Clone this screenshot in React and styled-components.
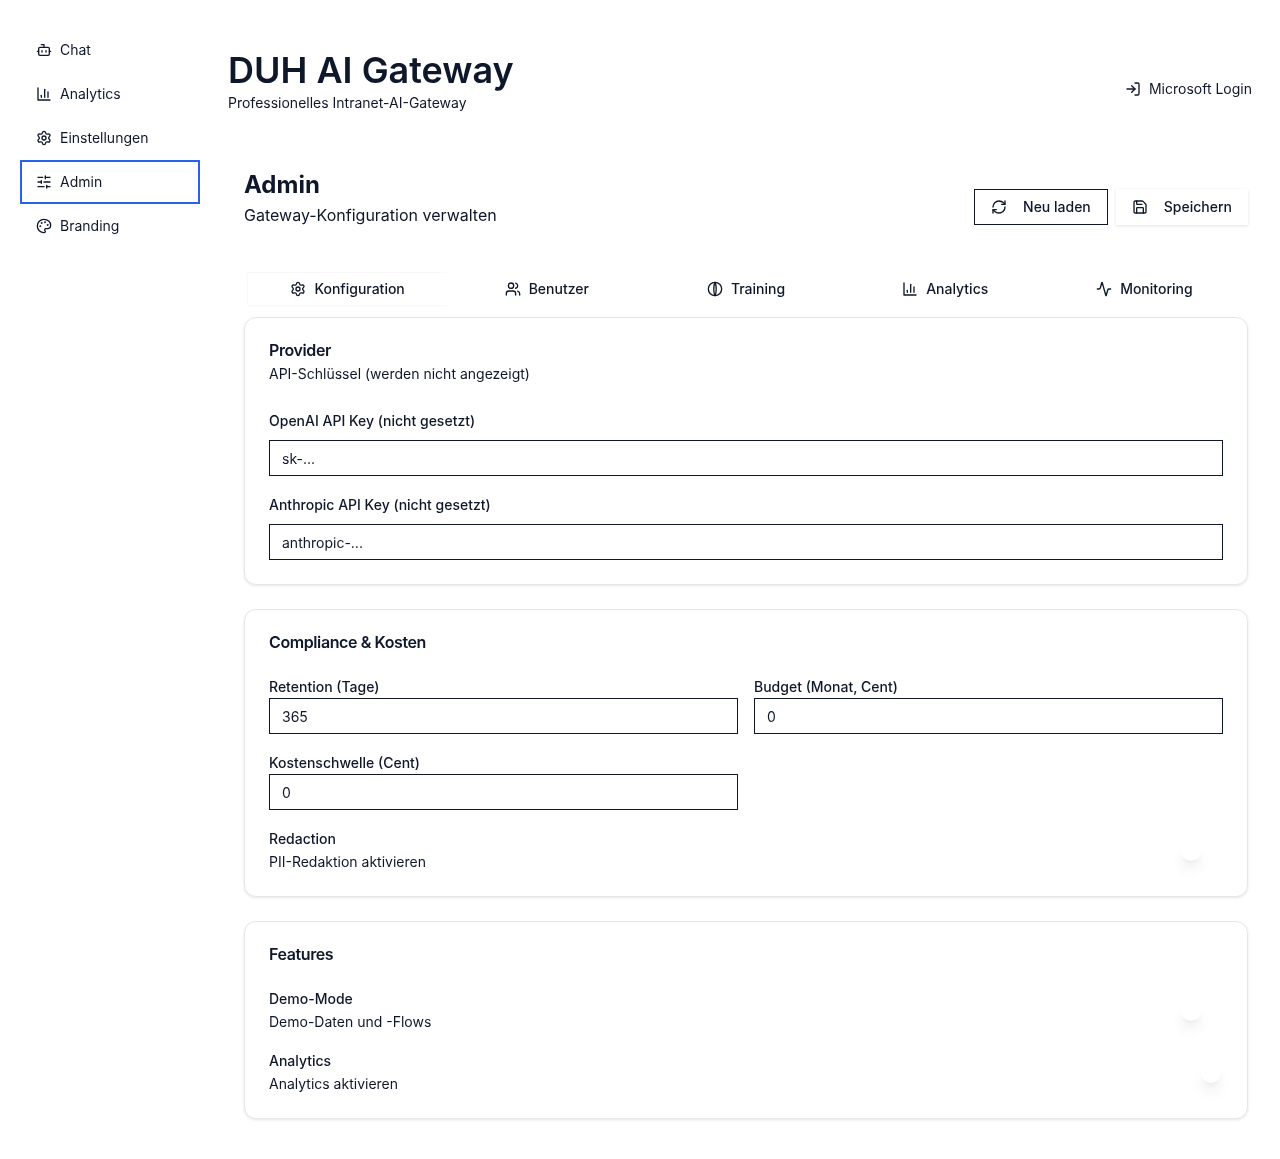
import React from 'react'
import styled, { createGlobalStyle } from 'styled-components'
import {
    Activity,
    Bot,
    LogIn,
    Palette,
    RefreshCw,
    Save,
    Settings,
    SlidersHorizontal,
    Users
} from 'lucide-react'

const GlobalStyle = createGlobalStyle`
  * { box-sizing: border-box; }
  body {
    margin: 0;
    background: #ffffff;
    color: #0f172a;
    font-family: Inter, "Liberation Sans", sans-serif;
    -webkit-font-smoothing: antialiased;
  }
`

const Shell = styled.div`
  display: flex;
  min-height: 1159px;
  will-change: transform;
`

const Sidebar = styled.nav`
  width: 220px;
  flex-shrink: 0;
  padding: 28px 20px;
  display: flex;
  flex-direction: column;
`

const NavItem = styled.a`
  display: flex;
  align-items: center;
  gap: 8px;
  height: 44px;
  padding: 0 14px;
  font-size: 14px;
  line-height: 20px;
  color: #0f172a;
  border: 2px solid ${props => (props.$active ? '#2563eb' : 'transparent')};
`

const Main = styled.main`
  flex: 1;
  min-width: 0;
  padding: 0 28px 0 8px;
`

const Header = styled.header`
  display: flex;
  justify-content: space-between;
  align-items: flex-end;
  padding-top: 50px;
`

const Title = styled.h1`
  margin: 0;
  font-size: 36px;
  line-height: 40px;
  font-weight: 600;
  color: #0f172a;
`

const Tagline = styled.p`
  margin: 3px 0 0;
  font-size: 14px;
  line-height: 20px;
  color: #0f172a;
`

const LoginLink = styled.a`
  display: flex;
  align-items: center;
  gap: 8px;
  margin-bottom: 14px;
  font-size: 14px;
  line-height: 20px;
  color: #0f172a;
`

const Content = styled.div`
  padding: 56px 4px 40px 16px;
`

const PageHead = styled.div`
  display: flex;
  justify-content: space-between;
  align-items: flex-end;
`

const PageTitle = styled.h2`
  margin: 0;
  font-size: 24px;
  line-height: 32px;
  font-weight: 700;
  color: #0f172a;
`

const PageSub = styled.p`
  margin: 2px 0 0;
  font-size: 16px;
  line-height: 24px;
  color: #0f172a;
`

const Actions = styled.div`
  display: flex;
  gap: 8px;
  margin-bottom: 2px;
`

const ActionButton = styled.button`
  display: flex;
  align-items: center;
  gap: 16px;
  height: 36px;
  padding: 0 16px;
  background: #ffffff;
  color: #0f172a;
  font: 500 14px/20px Inter, "Liberation Sans", sans-serif;
  border: ${props => (props.$outlined ? '1px solid #0f172a' : '0')};
  box-shadow: ${props => (props.$outlined ? 'none' : '0 1px 3px rgba(15, 23, 42, 0.12)')};
`

const TabList = styled.div`
  display: grid;
  grid-template-columns: repeat(5, 1fr);
  margin-top: 42px;
  padding: 4px;
  height: 40px;
`

const Tab = styled.button`
  display: flex;
  align-items: center;
  justify-content: center;
  gap: 8px;
  background: #ffffff;
  border: 0;
  padding: 0;
  color: #0f172a;
  font: 500 14px/20px Inter, "Liberation Sans", sans-serif;
  box-shadow: ${props => (props.$active ? '0 0 2px rgba(15, 23, 42, 0.08)' : 'none')};
`

const Card = styled.section`
  margin-top: ${props => props.$gap}px;
  padding: 24px;
  background: #ffffff;
  border: 1px solid #e5e7eb;
  border-radius: 12px;
  box-shadow: 0 1px 3px rgba(15, 23, 42, 0.1);
`

const CardTitle = styled.h3`
  margin: 0;
  font-size: 16px;
  line-height: 16px;
  font-weight: 600;
  letter-spacing: -0.4px;
  color: #0f172a;
`

const CardSub = styled.p`
  margin: 6px 0 0;
  font-size: 14px;
  line-height: 20px;
  color: #0f172a;
`

const Stack = styled.div`
  display: flex;
  flex-direction: column;
  gap: 19px;
  margin-top: 27px;
`

const Field = styled.label`
  display: block;
`

const FieldLabel = styled.span`
  display: block;
  font-size: 14px;
  line-height: 20px;
  font-weight: 500;
  color: #0f172a;
  margin-bottom: ${props => (props.$tight ? 1 : 9)}px;
`

const TextInput = styled.input`
  display: block;
  width: 100%;
  height: 36px;
  padding: 0 12px;
  border: 1px solid #0f172a;
  border-radius: 0;
  background: #ffffff;
  color: #0f172a;
  font: 400 14px/20px Inter, "Liberation Sans", sans-serif;
  &::placeholder { color: #0f172a; opacity: 1; }
`

const FormGrid = styled.div`
  display: grid;
  grid-template-columns: 1fr 1fr;
  gap: 19px 16px;
  margin-top: 27px;
`

const ToggleRow = styled.div`
  display: flex;
  justify-content: space-between;
  align-items: center;
  margin-top: ${props => props.$gap}px;
`

const ToggleLabel = styled.div`
  font-size: 14px;
  line-height: 20px;
  font-weight: 500;
  color: #0f172a;
`

const ToggleHint = styled.div`
  margin-top: 3px;
  font-size: 14px;
  line-height: 20px;
  color: #0f172a;
`

const SwitchTrack = styled.span`
  display: block;
  width: 44px;
  height: 24px;
  padding: 2px;
  flex-shrink: 0;
`

const SwitchThumb = styled.span`
  display: block;
  width: 20px;
  height: 20px;
  border-radius: 50%;
  background: #ffffff;
  box-shadow: 0 10px 15px -3px rgba(0, 0, 0, 0.1), 0 4px 6px -4px rgba(0, 0, 0, 0.1);
  transform: translateX(${props => (props.$on ? 20 : 0)}px);
`

const BarsIcon = ({ size }) => (
    <svg width={size} height={size} viewBox="0 0 24 24" fill="none" stroke="currentColor"
        strokeWidth="2" strokeLinecap="round" strokeLinejoin="round">
        <path d="M3 3v18h18" />
        <path d="M18 17V9" />
        <path d="M13 17V5" />
        <path d="M8 17v-3" />
    </svg>
)

const TrainingIcon = ({ size }) => (
    <svg width={size} height={size} viewBox="0 0 24 24" fill="none" stroke="currentColor"
        strokeWidth="2" strokeLinecap="round" strokeLinejoin="round">
        <circle cx="12" cy="12" r="10" />
        <path d="M12 2c-2.4 4-2.4 16 0 20 2.4-4 2.4-16 0-20Z" />
    </svg>
)

const navItems = [
    { label: 'Chat', icon: Bot },
    { label: 'Analytics', icon: BarsIcon },
    { label: 'Einstellungen', icon: Settings },
    { label: 'Admin', icon: SlidersHorizontal, active: true },
    { label: 'Branding', icon: Palette }
]

const tabs = [
    { label: 'Konfiguration', icon: Settings, active: true },
    { label: 'Benutzer', icon: Users },
    { label: 'Training', icon: TrainingIcon },
    { label: 'Analytics', icon: BarsIcon },
    { label: 'Monitoring', icon: Activity }
]

const Toggle = ({ label, hint, on, gap }) => (
    <ToggleRow $gap={gap}>
        <div>
            <ToggleLabel>{label}</ToggleLabel>
            <ToggleHint>{hint}</ToggleHint>
        </div>
        <SwitchTrack>
            <SwitchThumb $on={on} />
        </SwitchTrack>
    </ToggleRow>
)

export default function App () {
    return (
        <Shell>
            <GlobalStyle />
            <Sidebar>
                {navItems.map(({ label, icon: Icon, active }) => (
                    <NavItem key={label} $active={active}>
                        <Icon size={16} />
                        {label}
                    </NavItem>
                ))}
            </Sidebar>
            <Main>
                <Header>
                    <div>
                        <Title>DUH AI Gateway</Title>
                        <Tagline>Professionelles Intranet-AI-Gateway</Tagline>
                    </div>
                    <LoginLink>
                        <LogIn size={16} />
                        Microsoft Login
                    </LoginLink>
                </Header>
                <Content>
                    <PageHead>
                        <div>
                            <PageTitle>Admin</PageTitle>
                            <PageSub>Gateway-Konfiguration verwalten</PageSub>
                        </div>
                        <Actions>
                            <ActionButton $outlined>
                                <RefreshCw size={16} />
                                Neu laden
                            </ActionButton>
                            <ActionButton>
                                <Save size={16} />
                                Speichern
                            </ActionButton>
                        </Actions>
                    </PageHead>
                    <TabList>
                        {tabs.map(({ label, icon: Icon, active }) => (
                            <Tab key={label} $active={active}>
                                <Icon size={16} />
                                {label}
                            </Tab>
                        ))}
                    </TabList>
                    <Card $gap={8}>
                        <CardTitle>Provider</CardTitle>
                        <CardSub>API-Schlüssel (werden nicht angezeigt)</CardSub>
                        <Stack>
                            <Field>
                                <FieldLabel>OpenAI API Key (nicht gesetzt)</FieldLabel>
                                <TextInput placeholder="sk-..." />
                            </Field>
                            <Field>
                                <FieldLabel>Anthropic API Key (nicht gesetzt)</FieldLabel>
                                <TextInput placeholder="anthropic-..." />
                            </Field>
                        </Stack>
                    </Card>
                    <Card $gap={24}>
                        <CardTitle>Compliance &amp; Kosten</CardTitle>
                        <FormGrid>
                            <Field>
                                <FieldLabel $tight>Retention (Tage)</FieldLabel>
                                <TextInput defaultValue="365" />
                            </Field>
                            <Field>
                                <FieldLabel $tight>Budget (Monat, Cent)</FieldLabel>
                                <TextInput defaultValue="0" />
                            </Field>
                            <Field>
                                <FieldLabel $tight>Kostenschwelle (Cent)</FieldLabel>
                                <TextInput defaultValue="0" />
                            </Field>
                        </FormGrid>
                        <Toggle label="Redaction" hint="PII-Redaktion aktivieren" gap={19} />
                    </Card>
                    <Card $gap={24}>
                        <CardTitle>Features</CardTitle>
                        <Toggle label="Demo-Mode" hint="Demo-Daten und -Flows" gap={27} />
                        <Toggle label="Analytics" hint="Analytics aktivieren" gap={19} on />
                    </Card>
                </Content>
            </Main>
        </Shell>
    )
}
